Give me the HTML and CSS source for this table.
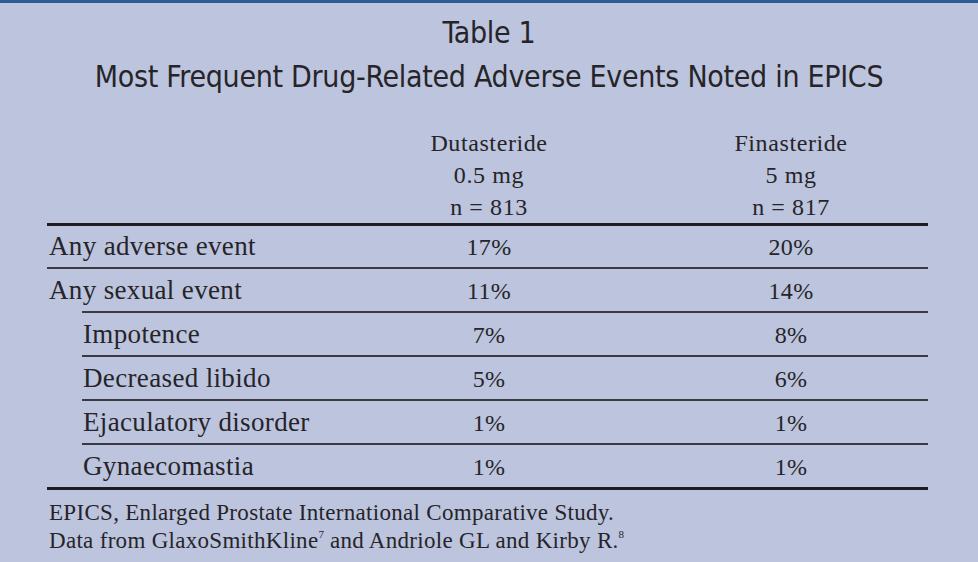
FILE: index.html
```html
<!DOCTYPE html>
<html>
<head>
<meta charset="utf-8">
<link rel="stylesheet" href="styles.css">
</head>
<body>
<div class="page">
  <div class="title">
    <div class="title-line">Table 1</div>
    <div class="title-line">Most Frequent Drug-Related Adverse Events Noted in EPICS</div>
  </div>
  <div class="tbl">
    <div class="row head">
      <div class="lab"></div>
      <div class="val">Dutasteride<br>0.5 mg<br>n = 813</div>
      <div class="val v2">Finasteride<br>5 mg<br>n = 817</div>
    </div>
    <div class="row main first">
      <div class="lab">Any adverse event</div>
      <div class="val">17%</div>
      <div class="val v2">20%</div>
    </div>
    <div class="row main">
      <div class="lab">Any sexual event</div>
      <div class="val">11%</div>
      <div class="val v2">14%</div>
    </div>
    <div class="sub">
      <div class="row subrow">
        <div class="lab">Impotence</div>
        <div class="val">7%</div>
        <div class="val v2">8%</div>
      </div>
      <div class="row subrow">
        <div class="lab">Decreased libido</div>
        <div class="val">5%</div>
        <div class="val v2">6%</div>
      </div>
      <div class="row subrow">
        <div class="lab">Ejaculatory disorder</div>
        <div class="val">1%</div>
        <div class="val v2">1%</div>
      </div>
      <div class="row subrow">
        <div class="lab">Gynaecomastia</div>
        <div class="val">1%</div>
        <div class="val v2">1%</div>
      </div>
    </div>
  </div>
  <div class="notes">
    <div>EPICS, Enlarged Prostate International Comparative Study.</div>
    <div>Data from GlaxoSmithKline<sup>7</sup> and Andriole GL and Kirby R.<sup>8</sup></div>
  </div>
</div>
</body>
</html>
```

FILE: styles.css
```css
html, body {
  margin: 0;
  padding: 0;
  background: #bcc4de;
}
.page {
  box-sizing: border-box;
  width: 978px;
  height: 562px;
  border-top: 3px solid #2e5a96;
  background: #bcc4de;
  color: #262428;
  padding: 7px 50px 0 47px;
  overflow: hidden;
}
.title {
  text-align: center;
  font-family: "Liberation Sans Narrow", "DejaVu Sans Condensed", "Liberation Sans", sans-serif;
  font-stretch: condensed;
  font-size: 30px;
  line-height: 44px;
  letter-spacing: -0.3px;
  margin-left: -47px;
  margin-right: -50px;
  padding-top: 1px;
}
.tbl {
  margin-top: 28px;
  font-family: "Liberation Serif", serif;
  border-bottom: 3px solid #1e1c20;
}
.row {
  display: grid;
  grid-template-columns: 322px 240px 1fr;
  align-items: baseline;
}
.lab {
  font-size: 27px;
  letter-spacing: 0.35px;
  line-height: 42px;
  padding-left: 2px;
}
.val {
  font-size: 24px;
  line-height: 24px;
  text-align: center;
  letter-spacing: 0.3px;
}
.v2 {
  padding-left: 45px;
}
.head {
  border-bottom: 3px solid #1e1c20;
}
.head .lab {
  line-height: 32px;
}
.head .val {
  line-height: 32px;
  letter-spacing: 0.6px;
}
.first .lab {
  line-height: 41px;
}
.first {
  border-bottom: 2px solid #3a3a42;
}
.sub {
  margin-left: 35px;
}
.subrow {
  grid-template-columns: 287px 240px 1fr;
  border-top: 2px solid #3a3a42;
}
.subrow .lab {
  padding-left: 1px;
}
.notes {
  margin-top: 9px;
  padding-left: 2px;
  font-family: "Liberation Serif", serif;
  font-size: 23px;
  line-height: 28px;
  letter-spacing: 0.3px;
}
.notes sup {
  font-size: 11px;
  line-height: 0;
  vertical-align: 10px;
  letter-spacing: 0;
}
```
